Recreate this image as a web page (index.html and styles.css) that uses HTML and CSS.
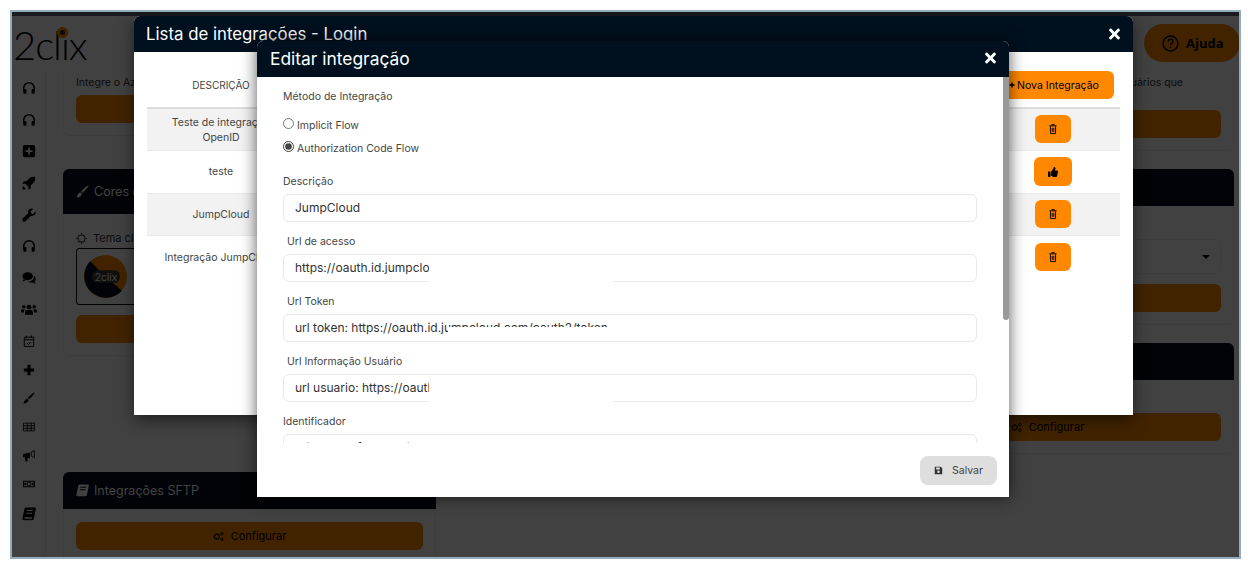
FILE: index.html
```html
<!DOCTYPE html>
<html lang="pt-BR">
<head>
<meta charset="utf-8">
<title>Lista de integrações - Login</title>
<link rel="stylesheet" href="styles.css">
</head>
<body>
<div class="frame">
  <div class="page">
    <header class="topbar">
      <div class="logo"><span>2clix</span><i class="logo-dot"></i></div>
      <button class="help"><svg class="help-icon" viewBox="0 0 20 20"><circle cx="10" cy="10" r="8.8" fill="none" stroke="currentColor" stroke-width="1.6"/><path d="M7.3 7.6c0-3.4 5.5-3.4 5.5 0 0 2.2-2.7 2-2.7 4.2" fill="none" stroke="currentColor" stroke-width="1.7"/><circle cx="10.1" cy="14.4" r="1.1" fill="currentColor"/></svg>Ajuda</button>
    </header>
    <div class="main">
      <nav class="sidebar">
        <div class="nav-group nav-large">
          <svg class="ico" viewBox="0 0 16 16"><path d="M2 11V8a6 6 0 0 1 12 0v3" fill="none" stroke="currentColor" stroke-width="1.800"/><rect x="1.500" y="9" width="3.500" height="5.500" rx="1"/><rect x="11" y="9" width="3.500" height="5.500" rx="1"/></svg>
          <svg class="ico" viewBox="0 0 16 16"><path d="M2 11V8a6 6 0 0 1 12 0v3" fill="none" stroke="currentColor" stroke-width="1.800"/><rect x="1.500" y="9" width="3.500" height="5.500" rx="1"/><rect x="11" y="9" width="3.500" height="5.500" rx="1"/></svg>
          <svg class="ico" viewBox="0 0 16 16"><path fill-rule="evenodd" d="M3 1h10a2 2 0 0 1 2 2v10a2 2 0 0 1-2 2H3a2 2 0 0 1-2-2V3a2 2 0 0 1 2-2zm4 3v3H4v2h3v3h2V9h3V7H9V4z"/></svg>
          <svg class="ico" viewBox="0 0 16 16"><path d="M15 1c-4-.5-7 1-9.500 5H2L0.500 9l3-.5 4 4L7 15.500l3-1.500v-3.500C14 8 15.500 5 15 1zM1.500 11.500c-1 1-1 3-1 4 1 0 3 0 4-1z"/></svg>
          <svg class="ico" viewBox="0 0 16 16"><path d="M15.500 4l-2.800 2.800-2.300-.6-.6-2.300L12.600 1C10 0 7 1.500 7 4.500c0 .5 0 1 .2 1.300L1 12a2.100 2.100 0 0 0 3 3l6.200-6.200C13.500 9.800 16.500 7 15.500 4z"/></svg>
          <svg class="ico" viewBox="0 0 16 16"><path d="M2 11V8a6 6 0 0 1 12 0v3" fill="none" stroke="currentColor" stroke-width="1.800"/><rect x="1.500" y="9" width="3.500" height="5.500" rx="1"/><rect x="11" y="9" width="3.500" height="5.500" rx="1"/></svg>
          <svg class="ico" viewBox="0 0 16 16"><ellipse cx="6.500" cy="6" rx="6" ry="4.500"/><path d="M2 9l-1.500 3 4-1.500z"/><path d="M13.500 5.500c3 2 2.500 5 1 6.500l1 2.500-3.500-1.500c-2 .5-4 0-5-1 3.500 0 7-2 6.500-6.500z"/></svg>
          <svg class="ico ico-wide" viewBox="0 0 20 16"><circle cx="10" cy="4.500" r="3"/><circle cx="3.500" cy="4" r="2.200"/><circle cx="16.500" cy="4" r="2.200"/><path d="M5 14v-3a3 3 0 0 1 3-3h4a3 3 0 0 1 3 3v3z"/><path d="M0 11V9a2 2 0 0 1 2-2h2.500L3.500 11zM20 11V9a2 2 0 0 0-2-2h-2.500l1 4z"/></svg>
        </div>
        <div class="nav-group nav-small">
          <svg class="ico ico-sm" viewBox="0 0 14 14"><path d="M1.500 2.500h11v11h-11zM1.500 5.500h11M4 .5v3M10 .5v3M4.800 9.500l1.600 1.600 2.900-2.900" fill="none" stroke="currentColor" stroke-width="1.100"/></svg>
          <svg class="ico ico-sm" viewBox="0 0 14 14"><path d="M5.200 1h3.600v4.200H13v3.600H8.800V13H5.200V8.800H1V5.200h4.200z"/></svg>
          <svg class="ico ico-sm" viewBox="0 0 14 14"><path d="M13.500.5c.5 1-4 6-6.500 8L5.500 7c2-2.500 7-7 8-6.500zM4.800 7.800l1.500 1.500c0 2.500-3 4.200-6 4 1.500-1 1-4.500 4.500-5.500z"/></svg>
          <svg class="ico ico-sm" viewBox="0 0 14 14"><path d="M.5 2.500h13v9H.5zM.5 5.500h13M.5 8.500h13M5 2.500v9M9.500 2.500v9" fill="none" stroke="currentColor"/></svg>
          <svg class="ico ico-sm" viewBox="0 0 14 14"><path d="M0 5l8-2v7L5 9.300 5.500 13 3 13.500 2 8.500H0z"/><path d="M9.500 2.500l3.500-2 .5 8.500-4-2z" fill="none" stroke="currentColor" stroke-width="1"/></svg>
          <svg class="ico ico-sm ico-wide" viewBox="0 0 18 14"><path d="M.8 3h16.400v8H.8z" fill="none" stroke="currentColor" stroke-width="1.600"/><circle cx="9" cy="7" r="3" fill="none" stroke="currentColor" stroke-width="1.500"/><path d="M2 5h2.500v4H2zM13.500 5H16v4h-2.500z"/></svg>
          <svg class="ico" viewBox="0 0 16 16"><path fill-rule="evenodd" d="M5 .5h9.500c1 0 1.500.5 1.300 1.500l-2.300 11c-.2 1.200-.8 2-2 2H2.500C1 15 .2 14 .5 12.500L2.800 2.500C3 1.200 4 .5 5 .5zM5.500 3.500l-.3 1.200h7l.3-1.200zm-.7 3l-.3 1.200h7l.3-1.200zM2.800 12.200c-.2.800.1 1.200.8 1.200h7.600l.4-1.800H3.200z"/></svg>
        </div>
      </nav>
      <div class="content">
        <div class="col">
          <section class="card card-cut">
            <div class="card-body">
              <p class="card-text">Integre o Azure AD para login de usuários</p>
              <div class="btn-wide"></div>
            </div>
          </section>
          <section class="card card-tall">
            <h3 class="card-head"><svg class="head-ico" viewBox="0 0 14 14"><path d="M13.500.5c.5 1-4 6-6.500 8L5.500 7c2-2.500 7-7 8-6.500zM4.800 7.800l1.500 1.500c0 2.500-3 4.200-6 4 1.500-1 1-4.500 4.500-5.500z"/></svg>Cores do sistema</h3>
            <div class="card-body">
              <div class="theme-label"><svg class="sun" viewBox="0 0 14 14"><circle cx="7" cy="7" r="4.500" fill="none" stroke="currentColor" stroke-width="1.400"/><path d="M7 0v2M7 12v2M0 7h2M12 7h2M2 2l1.400 1.400M10.600 10.600L12 12M2 12l1.400-1.400M10.600 3.400L12 2" stroke="currentColor"/></svg>Tema claro</div>
              <div class="theme-box">
                <svg class="theme-pie" viewBox="0 0 42 42"><circle cx="21" cy="21" r="21" fill="#ff8800"/><path d="M21 21L6 6a21 21 0 1 0 31 29z" fill="#000e1c"/><rect x="8" y="15" width="27" height="12" rx="5" fill="#3c3c3c"/><text x="21.500" y="25" class="pie-text">2clix</text></svg>
              </div>
              <div class="btn-wide"></div>
            </div>
          </section>
          <section class="card card-sftp">
            <h3 class="card-head"><svg class="head-ico" viewBox="0 0 16 16"><path fill-rule="evenodd" d="M5 .5h9.500c1 0 1.500.5 1.300 1.500l-2.300 11c-.2 1.200-.8 2-2 2H2.500C1 15 .2 14 .5 12.500L2.800 2.500C3 1.200 4 .5 5 .5zM5.500 3.500l-.3 1.200h7l.3-1.200zm-.7 3l-.3 1.200h7l.3-1.200z"/></svg>Integrações SFTP</h3>
            <div class="card-body card-body-sftp">
              <div class="btn-wide"><svg class="cog" viewBox="0 0 16 14"><circle cx="5.500" cy="7" r="3.600" fill="none" stroke="currentColor" stroke-width="2.400" stroke-dasharray="1.800 .6"/><circle cx="13" cy="3" r="1.800" fill="none" stroke="currentColor" stroke-width="1.300"/><circle cx="13" cy="11" r="1.800" fill="none" stroke="currentColor" stroke-width="1.300"/></svg>Configurar</div>
            </div>
          </section>
        </div>
        <div class="col"></div>
        <div class="col">
          <section class="card card-cut">
            <div class="card-body">
              <p class="card-text card-text-end">Integre o Azure AD para login de usuários que</p>
              <div class="btn-wide btn-lower"></div>
            </div>
          </section>
          <section class="card">
            <h3 class="card-head">Idioma</h3>
            <div class="card-body card-body-select">
              <div class="select"><i class="caret"></i></div>
              <div class="btn-wide"></div>
            </div>
          </section>
          <section class="card">
            <h3 class="card-head">Integrações</h3>
            <div class="card-body card-body-config">
              <div class="btn-wide"><svg class="cog" viewBox="0 0 16 14"><circle cx="5.500" cy="7" r="3.600" fill="none" stroke="currentColor" stroke-width="2.400" stroke-dasharray="1.800 .6"/><circle cx="13" cy="3" r="1.800" fill="none" stroke="currentColor" stroke-width="1.300"/><circle cx="13" cy="11" r="1.800" fill="none" stroke="currentColor" stroke-width="1.300"/></svg>Configurar</div>
            </div>
          </section>
        </div>
      </div>
    </div>
  </div>

  <div class="backdrop"></div>

  <div class="modal modal-list">
    <div class="modal-head">
      <h2 class="modal-title">Lista de integrações - Login</h2>
      <svg class="close" viewBox="0 0 352 512"><path d="M242.720 256l100.070-100.070c12.280-12.280 12.280-32.190 0-44.480l-22.240-22.240c-12.280-12.280-32.190-12.280-44.480 0L176 189.280 75.930 89.210c-12.280-12.280-32.190-12.280-44.480 0L9.210 111.450c-12.280 12.280-12.280 32.190 0 44.480L109.280 256 9.210 356.070c-12.280 12.280-12.280 32.190 0 44.480l22.240 22.240c12.280 12.280 32.200 12.280 44.480 0L176 322.720l100.070 100.070c12.280 12.280 32.200 12.280 44.480 0l22.240-22.240c12.280-12.280 12.280-32.190 0-44.480L242.720 256z"/></svg>
    </div>
    <table class="list">
      <thead>
        <tr>
          <th class="col-desc">DESCRIÇÃO</th>
          <th></th>
          <th class="col-act"><button class="btn-new"><svg class="plus" viewBox="0 0 14 14"><path d="M5.200 1h3.600v4.200H13v3.600H8.800V13H5.200V8.800H1V5.200h4.200z"/></svg>Nova Integração</button></th>
        </tr>
      </thead>
      <tbody>
        <tr class="odd">
          <td>Teste de integração<br>OpenID</td><td></td>
          <td class="col-act"><button class="btn-act btn-first"><svg class="trash" viewBox="0 0 10 12"><path d="M3.500 1.500V.5h3v1M.5 2h9M1.800 2.500v9h6.400v-9M4 4.500v5M6 4.500v5" fill="none" stroke="currentColor" stroke-width="1.200"/></svg></button></td>
        </tr>
        <tr>
          <td>teste</td><td></td>
          <td class="col-act"><button class="btn-act btn-thumb"><svg class="thumb" viewBox="0 0 512 512"><path d="M104 224H24c-13.255 0-24 10.745-24 24v240c0 13.255 10.745 24 24 24h80c13.255 0 24-10.745 24-24V248c0-13.255-10.745-24-24-24zM384 81.452c0 42.416-25.970 66.208-33.277 94.548h101.723c33.397 0 59.397 27.746 59.553 58.098.084 17.938-7.546 37.249-19.439 49.197l-.11.11c9.836 23.337 8.237 56.037-9.308 79.469 8.681 25.895-.069 57.704-16.382 74.757 4.298 17.598 2.244 32.575-6.148 44.632C440.202 511.587 389.616 512 346.839 512l-2.845-.001c-48.287-.017-87.806-17.598-119.560-31.725-15.957-7.099-36.821-15.887-52.651-16.178-6.540-.12-11.783-5.457-11.783-11.998v-213.770c0-3.200 1.282-6.271 3.558-8.521 39.614-39.144 56.648-80.587 89.117-113.111 14.804-14.832 20.188-37.236 25.393-58.902C282.515 39.293 291.817 0 312 0c24 0 72 8 72 81.452z"/></svg></button></td>
        </tr>
        <tr class="odd">
          <td>JumpCloud</td><td></td>
          <td class="col-act"><button class="btn-act"><svg class="trash" viewBox="0 0 10 12"><path d="M3.500 1.500V.5h3v1M.5 2h9M1.800 2.500v9h6.400v-9M4 4.500v5M6 4.500v5" fill="none" stroke="currentColor" stroke-width="1.200"/></svg></button></td>
        </tr>
        <tr>
          <td>Integração JumpCloud</td><td></td>
          <td class="col-act"><button class="btn-act"><svg class="trash" viewBox="0 0 10 12"><path d="M3.500 1.500V.5h3v1M.5 2h9M1.800 2.500v9h6.400v-9M4 4.500v5M6 4.500v5" fill="none" stroke="currentColor" stroke-width="1.200"/></svg></button></td>
        </tr>
      </tbody>
    </table>
  </div>

  <div class="modal modal-edit">
    <div class="modal-head modal-head-edit">
      <h2 class="modal-title">Editar integração</h2>
      <svg class="close" viewBox="0 0 352 512"><path d="M242.720 256l100.070-100.070c12.280-12.280 12.280-32.190 0-44.480l-22.240-22.240c-12.280-12.280-32.190-12.280-44.480 0L176 189.280 75.930 89.210c-12.280-12.280-32.190-12.280-44.480 0L9.210 111.450c-12.280 12.280-12.280 32.190 0 44.480L109.280 256 9.210 356.070c-12.280 12.280-12.280 32.190 0 44.480l22.240 22.240c12.280 12.280 32.200 12.280 44.480 0L176 322.720l100.070 100.070c12.280 12.280 32.200 12.280 44.480 0l22.240-22.240c12.280-12.280 12.280-32.190 0-44.480L242.720 256z"/></svg>
    </div>
    <div class="modal-body">
      <i class="scroll-thumb"></i>
      <form class="form">
        <div class="label">Método de Integração</div>
        <div class="radios">
          <label class="radio"><input type="radio" name="flow"><span>Implicit Flow</span></label>
          <label class="radio"><input type="radio" name="flow" checked><span>Authorization Code Flow</span></label>
        </div>
        <div class="group">
          <div class="label">Descrição</div>
          <input class="field" value="JumpCloud">
        </div>
        <div class="group">
          <div class="label label-in">Url de acesso</div>
          <div class="field-wrap"><input class="field" value="https://oauth.id.jumpcloud.com/oauth2/auth"><i class="mask mask-full"></i></div>
        </div>
        <div class="group">
          <div class="label label-in">Url Token</div>
          <div class="field-wrap"><input class="field" value="url token: https://oauth.id.jumpcloud.com/oauth2/token"><i class="mask mask-low"></i></div>
        </div>
        <div class="group">
          <div class="label label-in">Url Informação Usuário</div>
          <div class="field-wrap"><input class="field" value="url usuario: https://oauth.id.jumpcloud.com/userinfo"><i class="mask mask-full"></i></div>
        </div>
        <div class="group">
          <div class="label">Identificador</div>
          <input class="field" value="Client ID: 6f1d7e2c-jumpcloud-a41b">
        </div>
      </form>
    </div>
    <div class="modal-foot">
      <button class="btn-save"><svg class="save" viewBox="0 0 12 12"><path fill-rule="evenodd" d="M1 1h8l2 2v8H1zm1.800 1v2.500h5V2zM6 6a1.700 1.700 0 1 0 0 3.400A1.700 1.700 0 0 0 6 6z"/></svg>Salvar</button>
    </div>
  </div>
</div>
</body>
</html>
```

FILE: styles.css
```css
* { box-sizing: border-box; }
html, body { margin: 0; height: 100%; background: #fff; overflow: hidden; }
body { padding: 10px 7px 5px 10px; font-family: "Inter", "Open Sans", sans-serif; color: #333; }
h2, h3, p { margin: 0; }
button { font-family: inherit; border: 0; padding: 0; color: inherit; }

.frame { position: relative; width: 1231px; height: 549px; border: 2px solid #93adbd; overflow: hidden; background: #fff; }
.page { height: 100%; display: flex; flex-direction: column; border-top: 4px solid #6b6875; }

.topbar { flex: 0 0 56px; display: flex; justify-content: space-between; align-items: flex-start; padding-top: 8px; background: #fff; position: relative; }
.logo { position: relative; margin-left: 1px; margin-top: -2px; font: 300 40px/46px "Lato", sans-serif; color: #000; letter-spacing: -1px; }
.logo-dot { position: absolute; left: 44px; top: 5px; width: 11px; height: 11px; border-radius: 50%; background: #222; border: 3px solid #ff8800; }
.help { width: 96px; height: 38px; margin-right: -1px; border-radius: 19px; background: #ff8800; color: #000; display: flex; align-items: center; gap: 7px; padding-left: 18px; font: 700 13px "Open Sans", sans-serif; }
.help-icon { width: 17px; height: 17px; }

.main { flex: 1; display: flex; min-height: 0; overflow: hidden; }
.sidebar { flex: 0 0 34px; border-right: 1px solid #e8e8e8; padding-top: 9px; display: flex; flex-direction: column; align-items: center; }
.nav-group { display: flex; flex-direction: column; align-items: center; }
.nav-large { gap: 17.700px; }
.nav-small { gap: 16.700px; margin-top: 18px; }
.ico { width: 14px; height: 14px; fill: #000; color: #000; display: block; }
.ico-wide { width: 16px; }
.ico-sm { width: 12px; height: 12px; }

.content { flex: 1; display: grid; grid-template-columns: 373px 373px 373px; gap: 26px; padding: 0 5px 0 17px; min-width: 0; }
.col { display: flex; flex-direction: column; gap: 18px; min-width: 0; }
.card { border: 1px solid #eee; border-radius: 6px; background: #fff; flex: none; }
.card-cut { border-top: 0; border-radius: 0 0 6px 6px; }
.card-tall { margin-top: 15px; }
.card-head { height: 37px; margin: -1px -1px 0; border-radius: 6px 6px 0 0; background: #000e1c; color: #fff; font-size: 12.500px; font-weight: 400; display: flex; align-items: center; gap: 5px; padding-left: 13px; }
.card-tall .card-head { height: 45px; }
.head-ico { width: 13px; height: 13px; fill: #fff; }
.card-body { padding: 0 12px 12px; }
.card-text { font-size: 10.500px; line-height: 22px; height: 23px; color: #333; white-space: nowrap; }
.card-text-end { text-align: right; padding-right: 38px; overflow: hidden; }
.btn-wide { height: 28px; border-radius: 6px; background: #ff8800; color: #000; display: flex; justify-content: center; align-items: center; gap: 7px; font-size: 11px; }
.btn-lower { margin-top: 15px; }
.cog { width: 11px; height: 11px; fill: none; }
.theme-label { display: flex; align-items: center; gap: 6px; padding-top: 14px; font-size: 11px; line-height: 14px; height: 34px; }
.sun { width: 11px; height: 11px; }
.theme-box { height: 57px; border: 1px solid #000; border-radius: 3px; padding: 6px 7px; margin-bottom: 10px; }
.theme-pie { width: 43px; height: 43px; display: block; }
.pie-text { font-size: 10px; fill: #fff; text-anchor: middle; }
.card-sftp { margin-top: 98px; flex: 1; border-bottom: 0; border-radius: 6px 6px 0 0; }
.card-body-sftp { padding-top: 13px; }
.card-body-select { padding-top: 33px; }
.card-body-config { padding-top: 33px; }
.select { position: relative; height: 35px; border: 1px solid #eee; border-radius: 5px; margin-bottom: 10px; }
.caret { position: absolute; right: 10px; top: 15px; border: 4px solid transparent; border-top-color: #000; }

.backdrop { position: absolute; inset: 0; background: rgba(0, 0, 0, .745); }

.modal { position: absolute; display: flex; flex-direction: column; background: #fff; border-radius: 6px 6px 0 0; box-shadow: 0 5px 15px rgba(0, 0, 0, .5); }
.modal-list { left: 122px; top: 4px; width: 999px; height: 399px; }
.modal-edit { left: 245px; top: 29px; width: 752px; height: 456px; box-shadow: 0 0 16px rgba(0, 0, 0, .65); }
.modal-head { flex: 0 0 36px; display: flex; justify-content: space-between; align-items: center; padding: 0 12px; background: #00101f; border-radius: 6px 6px 0 0; color: #fff; }
.modal-title { font-size: 16.800px; font-weight: 400; }
.close { width: 13px; height: 16px; fill: #fff; }

.list { margin: 19px 13px 0; width: 973px; border-collapse: collapse; table-layout: fixed; font-size: 10.500px; color: #444; text-align: center; }
.list th { font-weight: 400; font-size: 10px; height: 36px; border-bottom: 2px solid #ddd; padding: 0 0 8px; }
.list td { height: 42.500px; padding: 0; border-bottom: 1px solid #e8e8e8; line-height: 15px; }
.list tbody tr:last-child td { border-bottom: 0; }
.col-desc { width: 148px; }
.col-act { width: 135px; }
.odd { background: #f2f2f2; }
.btn-new { width: 120px; height: 28px; margin-left: 9px; border-radius: 6px; background: #ff8800; color: #000; font-size: 10.500px; display: flex; align-items: center; justify-content: center; gap: 2px; }
.plus { width: 6px; height: 8px; }
.btn-act { width: 36px; height: 28px; border-radius: 6px; background: #ff8800; color: #000; vertical-align: middle; }
.btn-first { margin-bottom: 2px; }
.btn-thumb { width: 38px; height: 29px; }
.trash { width: 8px; height: 10px; display: block; margin: auto; }
.thumb { width: 10px; height: 10px; display: block; margin: auto; }

.modal-head-edit { padding: 0 12px 2px 13px; }
.modal-head-edit .modal-title { font-size: 17.400px; }
.modal-body { position: relative; flex: 0 0 366px; overflow: hidden; padding: 12px 32px 0 26px; }
.scroll-thumb { position: absolute; right: 0; top: 0; width: 6px; height: 243px; background: #999; border-radius: 0 0 3px 3px; }
.label { font-size: 10.500px; line-height: 16px; color: #444; }
.group .label { height: 16px; padding-top: 2px; line-height: 14px; }
.group .label-in { padding-left: 4px; }
.radios { margin: 7px 0 15px; }
.radio { height: 23px; display: flex; align-items: center; font-size: 10.500px; color: #444; gap: 3px; }
.radio span { padding-top: 4px; }
.radio input { width: 11px; height: 11px; margin: 0; accent-color: #444; }
.group { margin-bottom: 11px; }
.field { display: block; width: 100%; height: 28px; margin-top: 5px; padding: 0 11px 2px; border: 1px solid #e8e8e8; border-radius: 6px; font: 400 12px "Inter", sans-serif; color: #333; background: #fff; outline: 0; }
.field-wrap { position: relative; }
.mask { position: absolute; background: #fff; left: 146px; width: 184px; }
.mask-full { top: 6px; height: 23px; }
.mask-low { top: 13px; height: 14px; left: 165px; width: 165px; }

.modal-foot { flex: 1; display: flex; justify-content: flex-end; align-items: flex-start; padding: 13px 12px 0 0; }
.btn-save { width: 77px; height: 29px; border-radius: 8px; background: #dedede; color: #444; font-size: 10.500px; display: flex; align-items: center; justify-content: center; gap: 9px; }
.save { width: 9px; height: 9px; fill: #333; }
```
